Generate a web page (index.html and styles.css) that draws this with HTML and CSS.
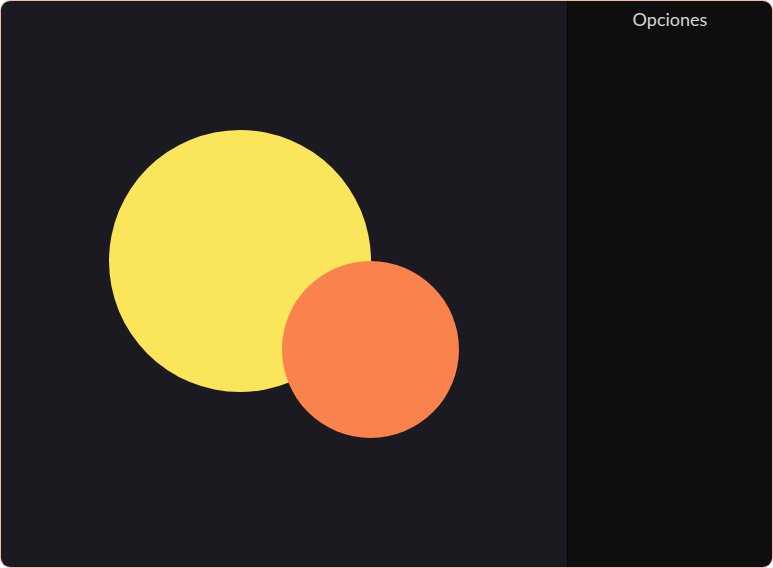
FILE: index.html
```html
<!DOCTYPE html>
<html lang="es">
<head>
<meta charset="utf-8">
<title>Opciones</title>
<link rel="stylesheet" href="styles.css">
</head>
<body>
<div class="frame">
  <main class="canvas">
    <div class="circle circle-yellow"></div>
    <div class="circle circle-orange"></div>
  </main>
  <aside class="panel">
    <h2 class="panel-title">Opciones</h2>
  </aside>
</div>
</body>
</html>
```
FILE: styles.css
```css
html, body {
  margin: 0;
  padding: 0;
  background: #ffffff;
}
.frame {
  box-sizing: border-box;
  width: 773px;
  height: 568px;
  border: 1px solid #fbb4ae;
  border-radius: 10px;
  overflow: hidden;
  display: flex;
}
.canvas {
  position: relative;
  flex: 1;
  background: #1b1a20;
}
.circle {
  position: absolute;
  border-radius: 50%;
}
.circle-yellow {
  left: 108px;
  top: 129px;
  width: 262px;
  height: 262px;
  background: #fbe55a;
}
.circle-orange {
  left: 281px;
  top: 260px;
  width: 177px;
  height: 177px;
  background: #fa824c;
}
.panel {
  width: 204px;
  background: #0e0e0e;
  border-left: 1px solid #060606;
}
.panel-title {
  margin: 7px 0 0;
  text-align: center;
  font-family: Lato, "Open Sans", sans-serif;
  font-weight: 400;
  font-size: 18px;
  line-height: 22px;
  color: #d6d6d6;
}
```
